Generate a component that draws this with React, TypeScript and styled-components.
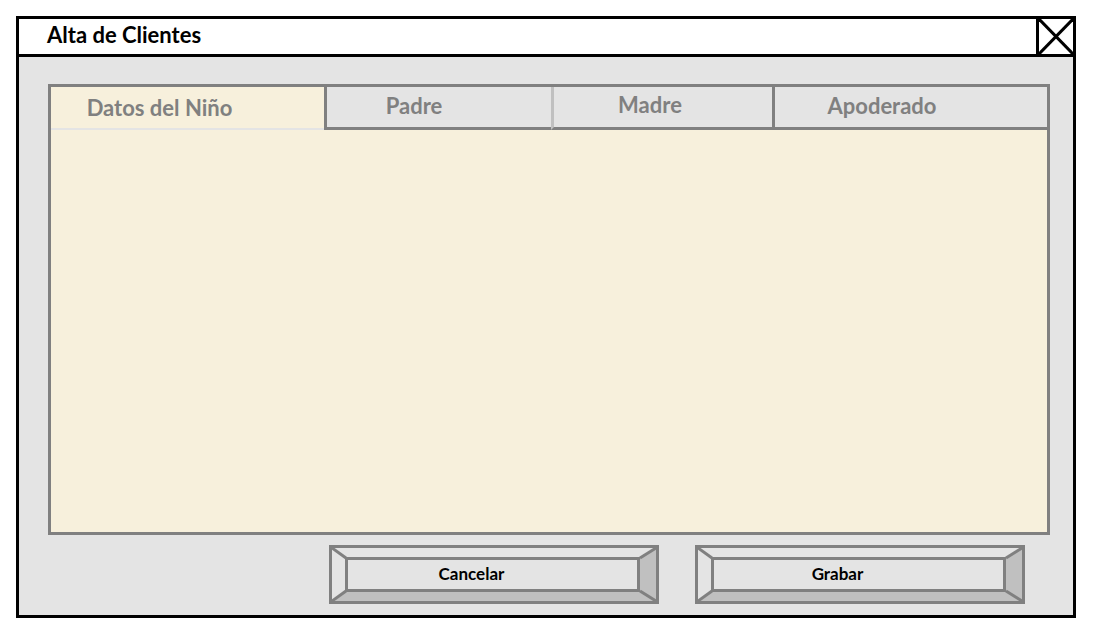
import styled, { createGlobalStyle } from "styled-components";

const GlobalStyle = createGlobalStyle`
  html, body {
    margin: 0;
    padding: 0;
    background: #ffffff;
  }
  body {
    font-family: Lato, "Open Sans", "Liberation Sans", sans-serif;
  }
`;

const Window = styled.div`
  box-sizing: border-box;
  width: 1060px;
  height: 602px;
  margin: 16px 0 0 16px;
  border: 3px solid #000;
  background: #e4e4e4;
  display: flex;
  flex-direction: column;
`;

const TitleBar = styled.div`
  display: flex;
  align-items: stretch;
  height: 35px;
  background: #fff;
  border-bottom: 3px solid #000;
`;

const Title = styled.h1`
  flex: 1;
  margin: 0;
  padding: 0 0 5px 28px;
  display: flex;
  align-items: center;
  font-size: 22px;
  font-weight: 700;
  color: #000;
`;

const CloseBox = styled.button`
  width: 37px;
  padding: 0;
  border: none;
  border-left: 3px solid #000;
  background: #fff;
  display: flex;

  svg {
    width: 100%;
    height: 100%;
  }
`;

const Body = styled.div`
  flex: 1;
  display: flex;
  flex-direction: column;
  padding: 27px 0 0 29px;
`;

const TabPanel = styled.div`
  box-sizing: border-box;
  width: 1002px;
  height: 451px;
  border: 3px solid #808080;
  background: #f7f0dc;
  display: flex;
  flex-direction: column;
`;

const TabStrip = styled.div`
  display: flex;
  height: 43px;
`;

const Tab = styled.div<{ $w: number; $active?: boolean; $divider?: string; $shift: number; $lift: number }>`
  box-sizing: border-box;
  width: ${({ $w }) => $w}px;
  display: flex;
  align-items: center;
  justify-content: center;
  padding: 0 ${({ $shift }) => $shift}px ${({ $lift }) => $lift}px 0;
  background: ${({ $active }) => ($active ? "#f7f0dc" : "#e4e4e4")};
  border-left: ${({ $divider }) => ($divider ? `3px solid ${$divider}` : "none")};
  border-bottom: ${({ $active }) => ($active ? "2px solid #e4e4e4" : "3px solid #808080")};
  font-size: 22px;
  font-weight: 700;
  color: #808080;
`;

const ButtonRow = styled.div`
  display: flex;
  gap: 36px;
  padding: 10px 0 0 281px;
`;

const BevelButton = styled.button`
  position: relative;
  box-sizing: border-box;
  width: 330px;
  height: 59px;
  padding: 0;
  border: 3px solid #808080;
  background: #e4e4e4;
  font-family: inherit;

  svg {
    position: absolute;
    inset: 0;
    width: 100%;
    height: 100%;
    pointer-events: none;
  }
`;

const Bevel = styled.div`
  box-sizing: border-box;
  height: 100%;
  border-style: solid;
  border-width: 9px 16px 9px 13px;
  border-color: #e4e4e4 #c0c0c0 #c0c0c0 #e4e4e4;
`;

const Face = styled.div`
  box-sizing: border-box;
  height: 100%;
  border: 3px solid #808080;
  display: flex;
  align-items: center;
  justify-content: center;
  padding: 0 42px 2px 0;
  font-size: 17px;
  font-weight: 700;
  color: #000;
`;

const tabs = [
  { label: "Datos del Niño", w: 273, active: true, shift: 56, lift: 0 },
  { label: "Padre", w: 227, divider: "#808080", shift: 50, lift: 4 },
  { label: "Madre", w: 221, divider: "#c0c0c0", shift: 26, lift: 6 },
  { label: "Apoderado", w: 275, divider: "#808080", shift: 58, lift: 4 },
];

const Button = ({ children }: { children: string }) => (
  <BevelButton>
    <Bevel>
      <Face>{children}</Face>
    </Bevel>
    <svg viewBox="0 0 324 53" preserveAspectRatio="none">
      <g stroke="#808080" strokeWidth="3">
        <line x1="0" y1="0" x2="14" y2="10" />
        <line x1="324" y1="0" x2="308" y2="10" />
        <line x1="0" y1="53" x2="14" y2="43" />
        <line x1="324" y1="53" x2="308" y2="43" />
      </g>
    </svg>
  </BevelButton>
);

const App = () => {
  return (
    <>
      <GlobalStyle />
      <Window>
        <TitleBar>
          <Title>Alta de Clientes</Title>
          <CloseBox aria-label="Cerrar">
            <svg viewBox="0 0 34 35" preserveAspectRatio="none">
              <g stroke="#000" strokeWidth="3">
                <line x1="0" y1="0" x2="34" y2="35" />
                <line x1="34" y1="0" x2="0" y2="35" />
              </g>
            </svg>
          </CloseBox>
        </TitleBar>
        <Body>
          <TabPanel>
            <TabStrip>
              {tabs.map((t) => (
                <Tab
                  key={t.label}
                  $w={t.w}
                  $active={t.active}
                  $divider={t.divider}
                  $shift={t.shift}
                  $lift={t.lift}
                >
                  {t.label}
                </Tab>
              ))}
            </TabStrip>
          </TabPanel>
          <ButtonRow>
            <Button>Cancelar</Button>
            <Button>Grabar</Button>
          </ButtonRow>
        </Body>
      </Window>
    </>
  );
};

export default App;
